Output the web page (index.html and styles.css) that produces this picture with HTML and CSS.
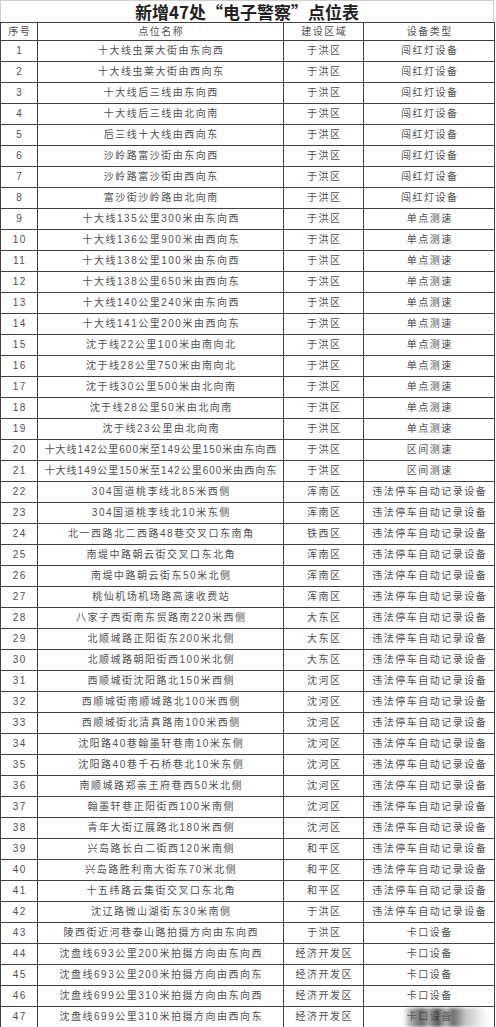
FILE: index.html
```html
<!DOCTYPE html>
<html lang="zh-CN">
<head>
<meta charset="utf-8">
<title>新增47处“电子警察”点位表</title>
<link rel="stylesheet" href="styles.css">
</head>
<body>
<div class="sheet">
  <div class="title">新增47处“电子警察”点位表</div>
  <table class="grid">
    <colgroup>
      <col class="c-no"><col class="c-name"><col class="c-area"><col class="c-type">
    </colgroup>
    <thead>
      <tr class="head"><th>序号</th><th>点位名称</th><th>建设区域</th><th>设备类型</th></tr>
    </thead>
    <tbody>
      <tr><td>1</td><td>十大线虫莱大街由东向西</td><td>于洪区</td><td>闯红灯设备</td></tr>
      <tr><td>2</td><td>十大线虫莱大街由西向东</td><td>于洪区</td><td>闯红灯设备</td></tr>
      <tr><td>3</td><td>十大线后三线由东向西</td><td>于洪区</td><td>闯红灯设备</td></tr>
      <tr><td>4</td><td>十大线后三线由北向南</td><td>于洪区</td><td>闯红灯设备</td></tr>
      <tr><td>5</td><td>后三线十大线由西向东</td><td>于洪区</td><td>闯红灯设备</td></tr>
      <tr><td>6</td><td>沙岭路富沙街由东向西</td><td>于洪区</td><td>闯红灯设备</td></tr>
      <tr><td>7</td><td>沙岭路富沙街由西向东</td><td>于洪区</td><td>闯红灯设备</td></tr>
      <tr><td>8</td><td>富沙街沙岭路由北向南</td><td>于洪区</td><td>闯红灯设备</td></tr>
      <tr><td>9</td><td>十大线135公里300米由东向西</td><td>于洪区</td><td>单点测速</td></tr>
      <tr><td>10</td><td>十大线136公里900米由西向东</td><td>于洪区</td><td>单点测速</td></tr>
      <tr><td>11</td><td>十大线138公里100米由东向西</td><td>于洪区</td><td>单点测速</td></tr>
      <tr><td>12</td><td>十大线138公里650米由西向东</td><td>于洪区</td><td>单点测速</td></tr>
      <tr><td>13</td><td>十大线140公里240米由东向西</td><td>于洪区</td><td>单点测速</td></tr>
      <tr><td>14</td><td>十大线141公里200米由西向东</td><td>于洪区</td><td>单点测速</td></tr>
      <tr><td>15</td><td>沈于线22公里100米由南向北</td><td>于洪区</td><td>单点测速</td></tr>
      <tr><td>16</td><td>沈于线28公里750米由南向北</td><td>于洪区</td><td>单点测速</td></tr>
      <tr><td>17</td><td>沈于线30公里500米由北向南</td><td>于洪区</td><td>单点测速</td></tr>
      <tr><td>18</td><td>沈于线28公里50米由北向南</td><td>于洪区</td><td>单点测速</td></tr>
      <tr><td>19</td><td>沈于线23公里由北向南</td><td>于洪区</td><td>单点测速</td></tr>
      <tr><td>20</td><td class="tight">十大线142公里600米至149公里150米由东向西</td><td>于洪区</td><td>区间测速</td></tr>
      <tr><td>21</td><td class="tight">十大线149公里150米至142公里600米由西向东</td><td>于洪区</td><td>区间测速</td></tr>
      <tr><td>22</td><td>304国道桃李线北85米西侧</td><td>浑南区</td><td>违法停车自动记录设备</td></tr>
      <tr><td>23</td><td>304国道桃李线北10米东侧</td><td>浑南区</td><td>违法停车自动记录设备</td></tr>
      <tr><td>24</td><td>北一西路北二西路48巷交叉口东南角</td><td>铁西区</td><td>违法停车自动记录设备</td></tr>
      <tr><td>25</td><td>南堤中路朝云街交叉口东北角</td><td>浑南区</td><td>违法停车自动记录设备</td></tr>
      <tr><td>26</td><td>南堤中路朝云街东50米北侧</td><td>浑南区</td><td>违法停车自动记录设备</td></tr>
      <tr><td>27</td><td>桃仙机场机场路高速收费站</td><td>浑南区</td><td>违法停车自动记录设备</td></tr>
      <tr><td>28</td><td>八家子西街南东贸路南220米西侧</td><td>大东区</td><td>违法停车自动记录设备</td></tr>
      <tr><td>29</td><td>北顺城路正阳街东200米北侧</td><td>大东区</td><td>违法停车自动记录设备</td></tr>
      <tr><td>30</td><td>北顺城路朝阳街西100米北侧</td><td>大东区</td><td>违法停车自动记录设备</td></tr>
      <tr><td>31</td><td>西顺城街沈阳路北150米西侧</td><td>沈河区</td><td>违法停车自动记录设备</td></tr>
      <tr><td>32</td><td>西顺城街南顺城路北100米西侧</td><td>沈河区</td><td>违法停车自动记录设备</td></tr>
      <tr><td>33</td><td>西顺城街北清真路南100米西侧</td><td>沈河区</td><td>违法停车自动记录设备</td></tr>
      <tr><td>34</td><td>沈阳路40巷翰墨轩巷南10米东侧</td><td>沈河区</td><td>违法停车自动记录设备</td></tr>
      <tr><td>35</td><td>沈阳路40巷千石桥巷北10米东侧</td><td>沈河区</td><td>违法停车自动记录设备</td></tr>
      <tr><td>36</td><td>南顺城路郑亲王府巷西50米北侧</td><td>沈河区</td><td>违法停车自动记录设备</td></tr>
      <tr><td>37</td><td>翰墨轩巷正阳街西100米南侧</td><td>沈河区</td><td>违法停车自动记录设备</td></tr>
      <tr><td>38</td><td>青年大街辽展路北180米西侧</td><td>沈河区</td><td>违法停车自动记录设备</td></tr>
      <tr><td>39</td><td>兴岛路长白二街西120米南侧</td><td>和平区</td><td>违法停车自动记录设备</td></tr>
      <tr><td>40</td><td>兴岛路胜利南大街东70米北侧</td><td>和平区</td><td>违法停车自动记录设备</td></tr>
      <tr><td>41</td><td>十五纬路云集街交叉口东北角</td><td>和平区</td><td>违法停车自动记录设备</td></tr>
      <tr><td>42</td><td>沈辽路微山湖街东30米南侧</td><td>于洪区</td><td>违法停车自动记录设备</td></tr>
      <tr><td>43</td><td>陵西街近河巷泰山路拍摄方向由东向西</td><td>于洪区</td><td>卡口设备</td></tr>
      <tr><td>44</td><td>沈盘线693公里200米拍摄方向由东向西</td><td>经济开发区</td><td>卡口设备</td></tr>
      <tr><td>45</td><td>沈盘线693公里200米拍摄方向由西向东</td><td>经济开发区</td><td>卡口设备</td></tr>
      <tr><td>46</td><td>沈盘线699公里310米拍摄方向由东向西</td><td>经济开发区</td><td>卡口设备</td></tr>
      <tr><td>47</td><td>沈盘线699公里310米拍摄方向由西向东</td><td>经济开发区</td><td>卡口设备</td></tr>
    </tbody>
  </table>
</div>
<div class="watermark"></div>
</body>
</html>
```
FILE: styles.css
```css
html, body {
  margin: 0;
  padding: 0;
  background: #ffffff;
}

body {
  font-family: "Liberation Sans", "Noto Sans CJK SC", sans-serif;
  position: relative;
}

.sheet {
  width: 494px;
}

.title {
  box-sizing: border-box;
  height: 22px;
  border: 1px solid #cfcfcf;
  border-bottom: none;
  text-align: center;
  font-family: "Noto Sans CJK SC", sans-serif;
  font-weight: bold;
  font-size: 17px;
  line-height: 21px;
  color: #222222;
}

.grid {
  width: 494px;
  border-collapse: collapse;
  table-layout: fixed;
}

.c-no { width: 37px; }
.c-name { width: 246px; }
.c-area { width: 80px; }
.c-type { width: 131px; }

.grid th,
.grid td {
  border: 1px solid #404040;
  padding: 0 0 0 1.5px;
  text-align: center;
  vertical-align: middle;
  font-size: 10px;
  font-weight: normal;
  letter-spacing: 1.5px;
  color: #505050;
  white-space: nowrap;
  overflow: hidden;
  line-height: 12px;
}

.grid td.tight {
  letter-spacing: 1px;
  padding-left: 1px;
}

.grid .head th {
  height: 17px;
}

.grid tbody td {
  height: 20px;
}

.watermark {
  position: absolute;
  left: 403px;
  top: 1008px;
  width: 86px;
  height: 19px;
  background:
    linear-gradient(90deg,
      rgba(255,255,255,0) 0%,
      rgba(90,90,90,0.55) 10%,
      rgba(60,60,60,0.75) 22%,
      rgba(110,110,110,0.6) 30%,
      rgba(50,50,50,0.8) 40%,
      rgba(120,120,120,0.55) 50%,
      rgba(60,60,60,0.75) 58%,
      rgba(130,130,130,0.5) 72%,
      rgba(180,180,180,0.3) 88%,
      rgba(255,255,255,0) 100%);
  filter: blur(1.5px);
}
```
